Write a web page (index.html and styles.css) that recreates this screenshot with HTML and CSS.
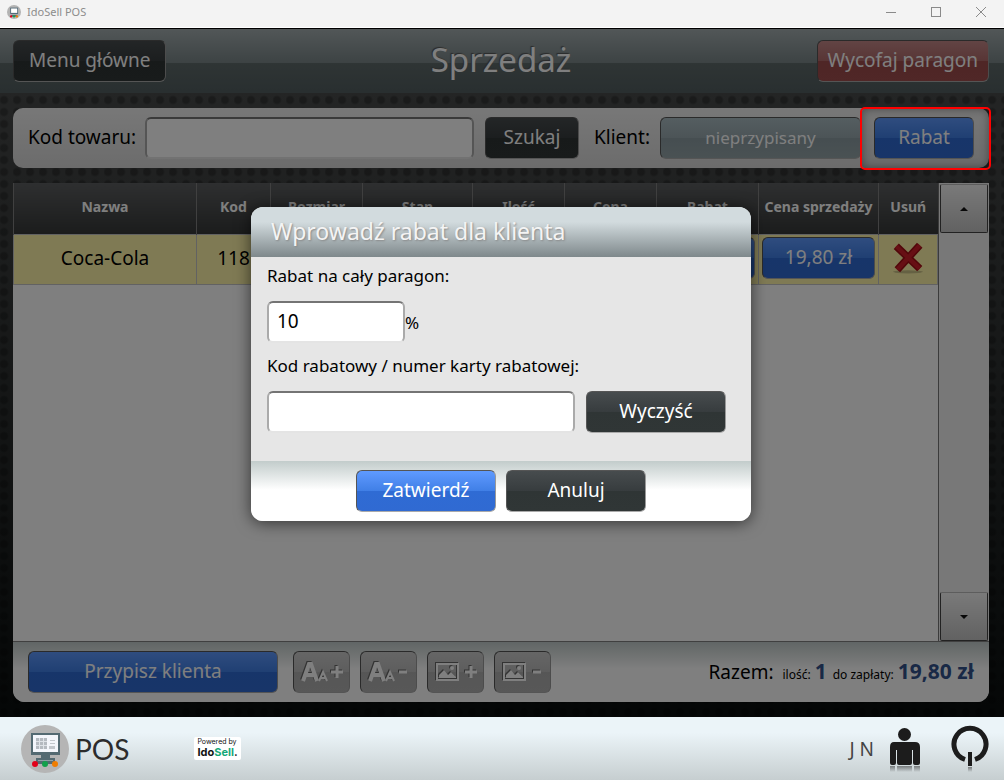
FILE: index.html
```html
<!DOCTYPE html>
<html lang="pl">
<head>
    <meta charset="UTF-8">
    <meta name="viewport" content="width=device-width, initial-scale=1.0">
    <title>IdoSell POS</title>
    <link rel="stylesheet" href="styles.css">
</head>
<body>
    <div class="titlebar">
        <svg class="titlebar-icon" viewBox="0 0 48 48" width="14" height="14">
            <circle cx="24" cy="24" r="24" fill="#b3b3b3"/>
            <rect x="11" y="9" width="27" height="22" fill="#546a79"/>
            <rect x="14" y="12" width="21" height="15" fill="#fff"/>
            <path d="M14 34h21v6H14z" fill="#546a79"/>
            <circle cx="14" cy="39" r="4" fill="#e2001a"/>
            <circle cx="24" cy="39" r="4" fill="#12a14b"/>
            <circle cx="34" cy="39" r="4" fill="#f07d00"/>
        </svg>
        <span class="titlebar-name">IdoSell POS</span>
        <div class="window-buttons">
            <button type="button" aria-label="Minimalizuj"><svg viewBox="0 0 12 12" width="12" height="12"><path d="M1 6.500h10"/></svg></button>
            <button type="button" aria-label="Maksymalizuj"><svg viewBox="0 0 12 12" width="12" height="12"><rect x="1.500" y="1.500" width="9" height="9"/></svg></button>
            <button type="button" aria-label="Zamknij"><svg viewBox="0 0 12 12" width="12" height="12"><path d="M1 1l10 10M11 1L1 11"/></svg></button>
        </div>
    </div>

    <div class="app">
        <header class="header">
            <button type="button" class="btn btn-dark">Menu główne</button>
            <h1>Sprzedaż</h1>
            <button type="button" class="btn btn-red">Wycofaj paragon</button>
        </header>

        <main class="main">
            <form class="search">
                <label for="kod">Kod towaru:</label>
                <input type="text" id="kod" class="field search-field">
                <button type="button" class="btn btn-dark btn-search">Szukaj</button>
                <span class="client-label">Klient:</span>
                <button type="button" class="btn btn-pale">nieprzypisany</button>
                <div class="marked">
                    <button type="button" class="btn btn-blue btn-rabat">Rabat</button>
                </div>
            </form>

            <section class="receipt">
                <div class="list">
                    <div class="list-table">
                        <table>
                            <colgroup>
                                <col>
                                <col class="col-s">
                                <col class="col-m">
                                <col class="col-l">
                                <col class="col-m">
                                <col class="col-m">
                                <col class="col-rabat">
                                <col class="col-xl">
                                <col class="col-xs">
                            </colgroup>
                            <thead>
                                <tr>
                                    <th>Nazwa</th>
                                    <th>Kod</th>
                                    <th>Rozmiar</th>
                                    <th>Stan</th>
                                    <th>Ilość</th>
                                    <th>Cena</th>
                                    <th>Rabat</th>
                                    <th>Cena sprzedaży</th>
                                    <th>Usuń</th>
                                </tr>
                            </thead>
                            <tbody>
                                <tr>
                                    <td>Coca-Cola</td>
                                    <td>118</td>
                                    <td></td>
                                    <td></td>
                                    <td></td>
                                    <td></td>
                                    <td><button type="button" class="btn btn-blue btn-cell" aria-label="Rabat"></button></td>
                                    <td><button type="button" class="btn btn-blue btn-cell">19,80 zł</button></td>
                                    <td>
                                        <button type="button" class="btn-delete" aria-label="Usuń">
                                            <svg viewBox="0 0 30 30" width="32" height="32">
                                                <ellipse cx="15" cy="28" rx="14" ry="1.500" fill="#000" opacity=".2"/>
                                                <path d="M4 4L26 25M26 3L5 26" stroke="#a30e14" stroke-width="7"/>
                                                <path d="M4 4L26 25M26 3L5 26" stroke="#cf1f28" stroke-width="4"/>
                                            </svg>
                                        </button>
                                    </td>
                                </tr>
                            </tbody>
                        </table>
                    </div>
                    <div class="scroll">
                        <button type="button" aria-label="W górę"><svg viewBox="0 0 8 4" width="8" height="4"><path d="M0 4L4 0l4 4z"/></svg></button>
                        <button type="button" aria-label="W dół"><svg viewBox="0 0 8 4" width="8" height="4"><path d="M0 0h8L4 4z"/></svg></button>
                    </div>
                </div>

                <div class="summary">
                    <button type="button" class="btn btn-blue btn-assign">Przypisz klienta</button>
                    <button type="button" class="btn btn-grey" aria-label="Większy tekst">
                        <svg viewBox="0 0 44 24" width="44" height="24">
                            <path d="M3 21L9 4h2l6 17M6 15h8" stroke-width="4"/>
                            <path d="M19 21l4-9 4 9M20 18h6" stroke-width="2"/>
                            <path d="M31 12h12M37 6v12" stroke-width="3"/>
                        </svg>
                    </button>
                    <button type="button" class="btn btn-grey" aria-label="Mniejszy tekst">
                        <svg viewBox="0 0 44 24" width="44" height="24">
                            <path d="M3 21L9 4h2l6 17M6 15h8" stroke-width="4"/>
                            <path d="M19 21l4-9 4 9M20 18h6" stroke-width="2"/>
                            <path d="M32 12h8" stroke-width="3"/>
                        </svg>
                    </button>
                    <button type="button" class="btn btn-grey" aria-label="Większe zdjęcia">
                        <svg viewBox="0 0 44 24" width="44" height="24">
                            <rect x="3" y="4" width="21" height="16" stroke-width="2"/>
                            <path d="M5 18v-3l5-5 4 5 3-3 5 5v1z" class="fill"/>
                            <circle cx="18" cy="8" r="2" class="fill"/>
                            <path d="M31 12h12M37 6v12" stroke-width="3"/>
                        </svg>
                    </button>
                    <button type="button" class="btn btn-grey" aria-label="Mniejsze zdjęcia">
                        <svg viewBox="0 0 44 24" width="44" height="24">
                            <rect x="3" y="4" width="21" height="16" stroke-width="2"/>
                            <path d="M5 18v-3l5-5 4 5 3-3 5 5v1z" class="fill"/>
                            <circle cx="18" cy="8" r="2" class="fill"/>
                            <path d="M32 12h8" stroke-width="3"/>
                        </svg>
                    </button>
                    <div class="total">
                        <span>Razem:</span>
                        <small>ilość:</small>
                        <strong>1</strong>
                        <small>do zapłaty:</small>
                        <strong>19,80 zł</strong>
                    </div>
                </div>
            </section>
        </main>

        <div class="overlay">
            <form class="modal" role="dialog" aria-labelledby="modal-title">
                <h2 id="modal-title">Wprowadź rabat dla klienta</h2>
                <div class="modal-body">
                    <label for="rabat">Rabat na cały paragon:</label>
                    <div class="modal-row">
                        <input type="text" id="rabat" class="field field-percent" value="10">
                        <span>%</span>
                    </div>
                    <label for="karta">Kod rabatowy / numer karty rabatowej:</label>
                    <div class="modal-row">
                        <input type="text" id="karta" class="field field-card">
                        <button type="button" class="btn btn-dark btn-modal">Wyczyść</button>
                    </div>
                </div>
                <div class="modal-footer">
                    <button type="button" class="btn btn-blue btn-modal">Zatwierdź</button>
                    <button type="button" class="btn btn-dark btn-modal">Anuluj</button>
                </div>
            </form>
        </div>
    </div>

    <footer class="footer">
        <svg viewBox="0 0 48 50" width="48" height="50">
            <circle cx="24" cy="25" r="24" fill="#b5b5b5"/>
            <rect x="10" y="9" width="29" height="22" fill="#546a72"/>
            <rect x="12" y="11" width="25" height="17" fill="#f4f6fb"/>
            <rect x="15" y="14" width="11" height="11" fill="#b5bac0"/>
            <path d="M15 17.500h11M15 21.500h11M18.500 14v11M22.500 14v11" stroke="#dfe3e8"/>
            <path d="M29 16.500h5M29 19.500h5" stroke="#c3c7cc"/>
            <rect x="28" y="22" width="6" height="3" fill="#c3c7cc"/>
            <path d="M20 31h9v3h5v6H15v-6h5z" fill="#546a72"/>
            <path d="M17 36.500h15" stroke="#8fa0a6"/>
            <circle cx="14" cy="40" r="3" fill="#e2001a"/>
            <circle cx="24" cy="40" r="3" fill="#12a14b"/>
            <circle cx="34" cy="40" r="3" fill="#f07d00"/>
        </svg>
        <span class="brand">POS</span>
        <div class="powered">
            <span>Powered by</span>
            <b>Ido<i>Sell</i>.</b>
        </div>
        <span class="user">J N</span>
        <button type="button" class="footer-btn" aria-label="Użytkownik">
            <svg viewBox="0 0 32 46" width="32" height="46">
                <defs>
                    <linearGradient id="mirror" x1="0" y1="0" x2="0" y2="1">
                        <stop offset="0" stop-color="#1c1c1c" stop-opacity=".5"/>
                        <stop offset="1" stop-color="#1c1c1c" stop-opacity="0"/>
                    </linearGradient>
                </defs>
                <circle cx="15.500" cy="8.500" r="6.500" fill="#1c1c1c"/>
                <path d="M5 16h21q5 0 5 5v16q0 2-2 2h-3q-2 0-2-2V24h-1v13q0 2-2 2H10q-2 0-2-2V24H7v13q0 2-2 2H3q-2 0-2-2V21q0-5 4-5z" fill="#1c1c1c"/>
                <path d="M1 40h5v6H1zM8 40h15v6H8zM25 40h6v6h-6z" fill="url(#mirror)"/>
            </svg>
        </button>
        <button type="button" class="footer-btn" aria-label="Wyloguj">
            <svg viewBox="0 0 38 48" width="38" height="48">
                <path d="M14 34.500A16 16 0 1 1 24 34.500" fill="none" stroke="#1c1c1c" stroke-width="5"/>
                <path d="M17 27h4v14h-4z" fill="#1c1c1c"/>
                <path d="M17 42h4v5h-4z" fill="url(#mirror)"/>
            </svg>
        </button>
    </footer>
</body>
</html>
```
FILE: styles.css
```css
* {
    box-sizing: border-box;
}
body {
    margin: 0;
    min-height: 100vh;
    display: flex;
    flex-direction: column;
    font-family: "Noto Sans", "Open Sans", sans-serif;
    font-size: 19px;
    color: #000;
    background: #000;
}
button, input {
    font-family: inherit;
    font-size: inherit;
    color: inherit;
}
h1, h2 {
    margin: 0;
    font-weight: 400;
}

/* window bar */
.titlebar {
    height: 28px;
    display: flex;
    align-items: center;
    padding: 0 1px 4px 7px;
    background: #f3f3f3;
    border-bottom: 1px solid #fff;
}
.titlebar-name {
    margin-left: 6px;
    font-size: 11px;
    color: #8c8c8c;
}
.window-buttons {
    margin-left: auto;
    display: flex;
}
.window-buttons button {
    width: 45px;
    height: 23px;
    padding: 0;
    display: flex;
    align-items: center;
    justify-content: center;
    border: 0;
    background: none;
}
.window-buttons svg {
    fill: none;
    stroke: #8a8a8a;
}

/* buttons */
.btn {
    height: 42px;
    padding: 0 15px 2px;
    border: 1px solid #777;
    border-color: #555 #999 #aaa #555;
    border-radius: 6px;
    color: #fff;
    white-space: nowrap;
}
.btn-dark {
    background: linear-gradient(#474c4e, #373c3e 50%, #2f3535 50%, #303636);
}
.btn-blue {
    background: linear-gradient(#5f9aff, #407fe6 50%, #2f6bd4 50%, #306ad2);
}
.btn-red {
    padding: 0 10px 2px;
    background: linear-gradient(#c48888, #b06a6a 50%, #9e4c4c 50%, #a04e4e);
}
.btn-pale {
    width: 201px;
    padding: 0 0 2px;
    font-size: 17px;
    background: linear-gradient(#aabcc2, #98a8ae 50%, #8c9ca2 50%, #94a4a8);
}
.btn-grey {
    width: 57px;
    padding: 0;
    display: flex;
    align-items: center;
    justify-content: center;
    background: linear-gradient(#ccc, #bbb 50%, #adadad 50%, #b0b0b0);
}
.btn-grey svg {
    fill: none;
    stroke: #fff;
    filter: drop-shadow(-1px -1px 0 #666);
}
.btn-grey .fill {
    fill: #fff;
    stroke: none;
}

.field {
    height: 42px;
    padding: 0 8px 2px;
    border: 2px solid;
    border-color: #747474 #aaa #e4e4e4 #aaa;
    border-radius: 6px;
    background: #fff;
}

/* sale screen */
.app {
    position: relative;
    flex: 1;
    display: flex;
    flex-direction: column;
}
.header {
    height: 65px;
    display: grid;
    grid-template-columns: 1fr auto 1fr;
    align-items: center;
    padding: 0 15px 0 13px;
    border-top: 1px solid #000;
    background: linear-gradient(#a4aeb0, #7a8688 53%, #5e6a6a 53%, #525e60);
}
.header .btn-dark {
    justify-self: start;
}
.header .btn-red {
    justify-self: end;
}
.header h1 {
    padding-bottom: 2px;
    font-size: 33px;
    line-height: 40px;
    color: #fff;
    text-shadow: -1px -1px 1px #555;
}
.main {
    flex: 1;
    display: flex;
    flex-direction: column;
    gap: 15px;
    padding: 15px 15px 15px 13px;
    background:
        radial-gradient(circle at 4px 7px, rgba(0, 0, 0, .25) 3px, transparent 5px) 0 0 / 13px 24px,
        radial-gradient(circle at 4px 7px, rgba(0, 0, 0, .25) 3px, transparent 5px) 0 12px / 13px 24px,
        linear-gradient(#484a4a, #0a0e0e);
}
.search {
    display: flex;
    align-items: center;
    padding: 9px 15px;
    border-radius: 10px;
    background: linear-gradient(#f0f0f0, #d8d8d8);
}
.search-field {
    flex: 1;
    min-width: 0;
    margin: 0 11px 0 9px;
}
.search label, .client-label {
    padding-bottom: 2px;
}
.btn-search {
    width: 94px;
}
.client-label {
    margin: 0 10px 0 15px;
}
.marked {
    position: relative;
    margin-left: 13px;
}
.marked::after {
    content: "";
    position: absolute;
    inset: -10px -17px -11px -14px;
    z-index: 2;
    border: 2px solid #f00;
    border-radius: 5px;
    box-shadow: inset 0 0 10px rgba(0, 0, 0, .4);
    pointer-events: none;
}
.btn-rabat {
    width: 100px;
}

.receipt {
    flex: 1;
    display: flex;
    flex-direction: column;
    border-radius: 0 0 12px 12px;
    overflow: hidden;
    background: #fff;
}
.list {
    flex: 1;
    display: flex;
}
.list-table {
    flex: 1;
}
table {
    width: 100%;
    table-layout: fixed;
    border-collapse: collapse;
}
.col-xs { width: 59px; }
.col-s { width: 74px; }
.col-m { width: 92px; }
.col-l { width: 110px; }
.col-rabat { width: 102px; }
.col-xl { width: 120px; }
th {
    height: 51px;
    padding: 0 0 3px;
    border-left: 1px solid #808080;
    background: linear-gradient(#5c5e60, #363838);
    color: #fff;
    font-size: 14px;
    white-space: nowrap;
}
td {
    height: 50px;
    padding: 0 3px 2px;
    border: 1px solid #c4c4c4;
    background: #fef4a8;
    text-align: center;
    vertical-align: middle;
}
.btn-cell {
    display: block;
    width: 100%;
    padding: 0 0 2px;
}
.btn-delete {
    display: block;
    margin: 0 auto;
    padding: 0;
    border: 0;
    background: none;
}
.btn-delete svg {
    display: block;
}
.scroll {
    width: 51px;
    display: flex;
    flex-direction: column;
    justify-content: space-between;
    padding: 1px 1px 0;
    border-left: 1px solid #777;
    background: #f0f0f0;
}
.scroll button {
    height: 49px;
    padding: 0;
    border: 1px solid #444;
    border-top-color: #bbb;
    border-radius: 2px;
    background: linear-gradient(#f4f4f4, #c4c4c4);
}
.scroll svg {
    display: block;
    margin: 0 auto;
    fill: #111;
}

.summary {
    display: flex;
    align-items: center;
    gap: 10px;
    padding: 9px 15px;
    border-top: 1px solid #808080;
    background: linear-gradient(#c2cccb, #fff 45%);
}
.btn-assign {
    width: 250px;
    margin-right: 5px;
}
.total {
    margin-left: auto;
    padding-bottom: 2px;
    display: flex;
    align-items: baseline;
    white-space: nowrap;
}
.total small {
    margin: 0 4px 0 9px;
    font-size: 12px;
}
.total small + strong + small {
    margin-left: 6px;
}
.total strong {
    font-size: 21px;
    color: #33528c;
}

/* modal */
.overlay {
    position: absolute;
    inset: 0;
    z-index: 1;
    display: flex;
    align-items: center;
    justify-content: center;
    padding: 0 2px 17px 0;
    background: rgba(0, 0, 0, .5);
}
.modal {
    width: 500px;
    border-radius: 12px;
    overflow: hidden;
    background: #e6e6e6;
    box-shadow: 0 2px 16px rgba(0, 0, 0, .6);
}
.modal h2 {
    padding: 0 20px 2px;
    font-size: 23px;
    line-height: 48px;
    color: #f4f4f4;
    background: linear-gradient(#d2dbde 30%, #7e888b);
    text-shadow: 1px 1px 2px #888;
}
.modal-body {
    padding: 6px 16px 28px;
    font-size: 17px;
}
.modal-body label {
    display: block;
    line-height: 26px;
}
.modal-row {
    display: flex;
    align-items: center;
    padding: 12px 0 10px;
}
.modal-row:last-child {
    padding-bottom: 0;
}
.field-percent {
    width: 138px;
    font-size: 19px;
}
.field-card {
    width: 308px;
    margin-right: 11px;
}
.btn-modal {
    width: 140px;
    padding: 0 0 2px;
    font-size: 19px;
}
.modal-footer {
    display: flex;
    justify-content: center;
    gap: 10px;
    padding: 9px;
    background: linear-gradient(#c2cccb, #fff 48%);
}

/* bottom bar */
.footer {
    height: 63px;
    display: flex;
    align-items: center;
    padding: 0 15px 0 21px;
    background: linear-gradient(#ebf4f8 25%, #c6ced0);
}
.brand {
    margin-left: 6px;
    font-family: Lato, sans-serif;
    font-weight: 400;
    font-size: 28px;
    color: #2c2c2c;
}
.powered {
    margin-left: 65px;
    padding: 1px 3px 2px;
    border-radius: 2px;
    background: #fff;
    color: #111;
    font-family: Inter, sans-serif;
}
.powered span, .powered b {
    display: block;
    font-size: 7px;
    line-height: 8px;
}
.powered b {
    font-size: 11px;
    line-height: 12px;
}
.powered i {
    font-style: normal;
    color: #15a878;
}
.user {
    margin-left: auto;
    color: #444;
}
.footer-btn {
    margin-left: 15px;
    padding: 0;
    border: 0;
    background: none;
}
.footer-btn + .footer-btn {
    margin-left: 30px;
}
.footer-btn svg {
    display: block;
}
```
